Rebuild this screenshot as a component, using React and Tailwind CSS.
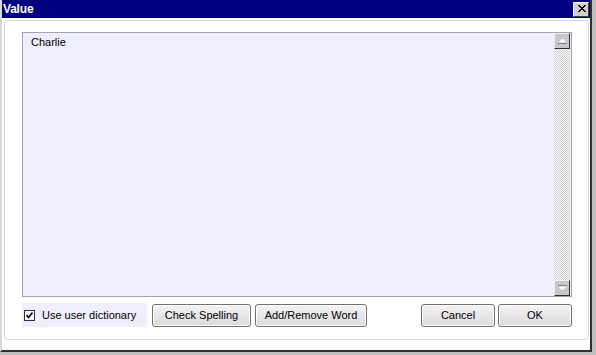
import React from "react";

const Btn = ({ children, w }) => (
  <button
    className={`${w} h-[23px] rounded-[3px] border border-[#707070] bg-gradient-to-b from-[#f4f4f4] to-[#dadada] text-[11px] text-black shadow-[inset_0_0_0_1px_#ffffff]`}
  >
    {children}
  </button>
);

const App = () => {
  return (
    <div className="w-[596px] h-[355px] bg-[#c0c0c0] overflow-hidden font-['Liberation_Sans',Arial,sans-serif]">
      <div className="w-[592px] h-[352px] bg-white border-r-2 border-b-2 border-[#303030] border-l-2 border-l-[#d8d8d8] flex flex-col">
        {/* TITLE BAR */}
        <div className="h-[18px] bg-[#000080] flex items-center justify-between pl-[1px] pr-[1px]">
          <span className="text-white font-bold text-[12px] tracking-[-0.2px]">Value</span>
          <div className="w-[16px] h-[15px] bg-[#d4d0c8] border border-t-white border-l-white border-r-[#404040] border-b-[#404040] flex items-center justify-center">
            <svg width="9" height="8" viewBox="0 0 9 8">
              <path d="M1 0 L8 7 M2 0 L9 7 M8 0 L1 7 M9 0 L2 7" stroke="#000" strokeWidth="1" />
            </svg>
          </div>
        </div>

        {/* BODY */}
        <div className="flex-1 pl-[2px] pr-[1px] pt-[2px] pb-[10px] flex">
          <div className="flex-1 rounded-[4px] border border-[#d6d6dc] pl-[17px] pr-[16px] pt-[11px] pb-[12px] flex flex-col">
            {/* TEXT AREA */}
            <div className="h-[265px] border border-[#a4a4b0] bg-[#eeeefc] flex">
              <div className="flex-1 pl-[8px] pt-[1px] text-[11px] text-black">Charlie</div>
              <div className="w-[16px] mr-[1px] flex flex-col">
                <div className="h-[16px] bg-[#c8c8c8] border border-t-[#f0f0f0] border-l-[#f0f0f0] border-r-[#303030] border-b-[#303030] flex items-center justify-center">
                  <svg width="9" height="6" viewBox="0 0 9 6">
                    <path d="M4.5 0.5 L8.5 4.5 L0.5 4.5 Z" fill="#ffffff" />
                    <path d="M0 5.5 L9 5.5" stroke="#808080" strokeWidth="1" />
                  </svg>
                </div>
                <div className="flex-1 bg-[repeating-conic-gradient(#cfcfcf_0_25%,#ffffff_0_50%)] bg-[length:2px_2px]" />
                <div className="h-[16px] bg-[#c8c8c8] border border-t-[#f0f0f0] border-l-[#f0f0f0] border-r-[#303030] border-b-[#303030] flex items-center justify-center">
                  <svg width="9" height="6" viewBox="0 0 9 6">
                    <path d="M0 0.5 L9 0.5" stroke="#808080" strokeWidth="1" />
                    <path d="M0.5 1.5 L8.5 1.5 L4.5 5.5 Z" fill="#ffffff" />
                  </svg>
                </div>
              </div>
            </div>

            {/* BOTTOM ROW */}
            <div className="mt-[6px] flex items-center">
              <label className="w-[125px] h-[24px] bg-[#eeeefc] flex items-center pl-[2px] gap-[7px] text-[11px] text-black">
                <span className="w-[11px] h-[11px] border border-[#303030] bg-white flex items-center justify-center">
                  <svg width="7" height="7" viewBox="0 0 7 7">
                    <path d="M0.5 3 L2.5 5.5 L6.5 0.5" stroke="#000" strokeWidth="1.6" fill="none" />
                  </svg>
                </span>
                Use user dictionary
              </label>
              <div className="ml-[5px] flex gap-[4px]">
                <Btn w="w-[99px]">Check Spelling</Btn>
                <Btn w="w-[112px]">Add/Remove Word</Btn>
              </div>
              <div className="ml-auto flex gap-[3px]">
                <Btn w="w-[74px]">Cancel</Btn>
                <Btn w="w-[74px]">OK</Btn>
              </div>
            </div>
          </div>
        </div>
      </div>
    </div>
  );
};

export default App;
